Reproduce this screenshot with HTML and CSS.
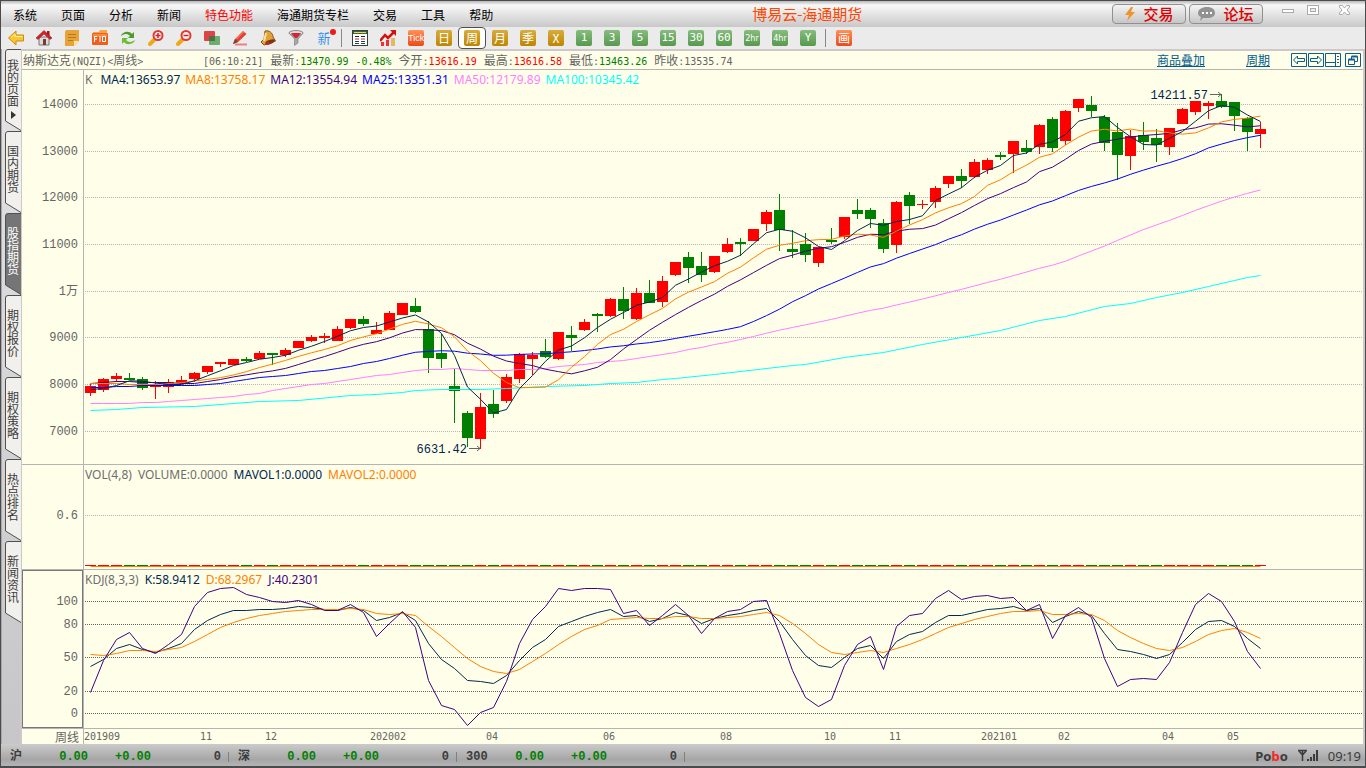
FILE: index.html
```html
<!DOCTYPE html>
<html lang="zh-CN">
<head>
<meta charset="utf-8">
<title>博易云-海通期货</title>
<link rel="stylesheet" href="styles.css">
</head>
<body>
<div class="app">
  <header class="titlebar">
    <nav class="menu">
      <a href="#">系统</a><a href="#">页面</a><a href="#">分析</a><a href="#">新闻</a><a href="#" class="hot">特色功能</a><a href="#">海通期货专栏</a><a href="#">交易</a><a href="#">工具</a><a href="#">帮助</a>
    </nav>
    <h1 class="brand">博易云-海通期货</h1>
    <div class="title-actions">
      <button class="pill" type="button"><svg width="12" height="16" viewBox="0 0 12 16"><path d="M7 1L1 9H5L3 15L11 6H7L9 1Z" fill="#f0932b"/></svg>交易</button>
      <button class="pill" type="button"><svg width="18" height="14" viewBox="0 0 18 14"><path d="M9 0C14 0 17 2.500 17 6S14 11 9 11L5 11L2 14L3 10C1 9 0 8 0 6C0 2.500 4 0 9 0Z" fill="#929292"/><path d="M4 5h2v2H4zM8 5h2v2H8zM12 5h2v2h-2z" fill="#fff"/></svg>论坛</button>
    </div>
    <div class="window-controls">
      <button type="button" aria-label="最小化"><svg width="14" height="12" viewBox="0 0 14 12"><rect x="1.500" y="5.500" width="11" height="3" fill="#fff" stroke="#aaa"/></svg></button>
      <button type="button" aria-label="最大化"><svg width="14" height="12" viewBox="0 0 14 12"><rect x="1.500" y="1.500" width="11" height="9" fill="#fff" stroke="#aaa"/><rect x="4.500" y="4.500" width="5" height="3" fill="#eee" stroke="#aaa"/></svg></button>
      <button type="button" aria-label="关闭"><svg width="14" height="12" viewBox="0 0 14 12"><path d="M1.500 1.500H4.500L6.500 4L8.500 1.500H11.500V3L9 6L11.500 9V10.500H8.500L6.500 8L4.500 10.500H1.500V9L4 6L1.500 3Z" fill="#fff" stroke="#aaa"/></svg></button>
    </div>
  </header>

  <div class="toolbar">
    <button type="button" aria-label="后退"><svg viewBox="0 0 16 16"><path d="M0.500 8L8 1V5H15.500V11H8V15Z" fill="#fbc62c" stroke="#c98b14"/><path d="M3 7.500L7 4V6.500H14.500" fill="none" stroke="#fff0a0"/></svg></button>
    <button type="button" aria-label="首页"><svg viewBox="0 0 16 16"><path d="M3 7H13V15H3Z" fill="#d9dde2" stroke="#777"/><path d="M11 1h2.500v5H11z" fill="#a11"/><path d="M0 8L8 0.500L16 8L14 9.500L8 4L2 9.500Z" fill="#d6202a" stroke="#901018" stroke-width=".5"/><path d="M7 9h3v6H7z" fill="#7b3d28"/></svg></button>
    <button type="button" aria-label="便笺"><svg viewBox="0 0 16 16"><path d="M2 0H15V11L10 16H1V2Z" fill="#e5a338"/><path d="M15 11L10 16V11Z" fill="#ffe49b"/><path d="M4 4.500H12M4 7.500H12M4 10.500H9" stroke="#b9781b"/></svg></button>
    <button type="button" aria-label="F10资料"><svg viewBox="0 0 16 16"><path d="M1 2H7L8 0H15V4H1Z" fill="#f7a541"/><rect x="0" y="3" width="16" height="12" rx="1" fill="#ee5f1e"/><path d="M1 4h14v3H1z" fill="#f58a45"/><path d="M2.500 12V6.500H5M2.500 9H5M8 6V12M10.500 6.500H13.500V11.500H10.500Z" stroke="#fff" fill="none"/></svg></button>
    <button type="button" aria-label="刷新"><svg viewBox="0 0 16 16"><path d="M1 6C2 2 9 0 12 4L14 2V8H8L10 6C7 3 4 4 1 6Z" fill="#4c9d28"/><path d="M15 10C14 14 7 16 4 12L2 14V8H8L6 10C9 13 12 12 15 10Z" fill="#6fbc38"/></svg></button>
    <button type="button" aria-label="放大"><svg viewBox="0 0 16 16"><path d="M2 14L6 10" stroke="#f0a818" stroke-width="4" stroke-linecap="round"/><circle cx="10" cy="5.500" r="4.500" fill="#fff1ee" stroke="#e03a30" stroke-width="2"/><path d="M7.500 5.500h5M10 3v5" stroke="#d22" stroke-width="1.500"/></svg></button>
    <button type="button" aria-label="缩小"><svg viewBox="0 0 16 16"><path d="M2 14L6 10" stroke="#f0a818" stroke-width="4" stroke-linecap="round"/><circle cx="10" cy="5.500" r="4.500" fill="#fff1ee" stroke="#e03a30" stroke-width="2"/><path d="M7.500 5.500h5" stroke="#d22" stroke-width="1.500"/></svg></button>
    <button type="button" aria-label="叠加"><svg viewBox="0 0 16 16"><rect x="0" y="1" width="11" height="10" rx="1" fill="#dd4444"/><rect x="5" y="6" width="11" height="9" rx="1" fill="#6cae6c"/><path d="M5 6h6v5H5z" fill="#4d7048"/></svg></button>
    <button type="button" aria-label="画笔"><svg viewBox="0 0 16 16"><path d="M3 14.500H15" stroke="#f08080" stroke-width="2"/><path d="M1 14L3 9L11 1L14.500 4L6 12Z" fill="#e5402b"/><path d="M4.500 9L11.500 2" stroke="#ff9d80"/><path d="M1 14L3 9L6 12Z" fill="#70483a"/></svg></button>
    <button type="button" aria-label="预警"><svg viewBox="0 0 16 16"><path d="M5 1C9 0 13 3 13 7L15.500 11L4 15L1 12L4 9Z" fill="#e2a23a" stroke="#855117"/><path d="M6 3Q5 7 4 11" stroke="#ffe29a" stroke-width="2" fill="none"/><ellipse cx="10" cy="12" rx="5" ry="2" transform="rotate(-20 10 12)" fill="#7d3418"/><circle cx="8" cy="13.500" r="1.500" fill="#d22"/></svg></button>
    <button type="button" aria-label="筛选"><svg viewBox="0 0 16 16"><path d="M1 3L6.500 9V15.500L10 13V9L15 3Z" fill="#a8a8a8" stroke="#777" stroke-width=".6"/><ellipse cx="8" cy="3" rx="7" ry="2.500" fill="#ddd" stroke="#888"/><path d="M3 3H13L9 8H7Z" fill="#d62433"/></svg></button>
    <button type="button" class="new-item">新<i class="dot"></i></button>
    <span class="divider"></span>
    <button type="button" aria-label="报价表"><svg viewBox="0 0 16 16"><rect x=".5" y=".5" width="15" height="15" fill="#fff" stroke="#33413c"/><path d="M1 1h14v3H1z" fill="#41603f"/><path d="M2 2.500h12" stroke="#e6d85c"/><path d="M3 6.500H7M9 6.500H13" stroke="#223"/><path d="M3 9H7M9 9H13" stroke="#c22"/><path d="M3 11.500H7M9 11.500H13" stroke="#238"/><path d="M3 13.500H7M9 13.500H13" stroke="#252"/></svg></button>
    <button type="button" aria-label="走势图"><svg viewBox="0 0 16 16"><path d="M1 12h3v4H1zM6 10h3v6H6z" fill="#f03030"/><path d="M11 8h4v8h-4z" fill="#e0bb62"/><path d="M0 11L5 5L8 8L14 2" fill="none" stroke="#d31111" stroke-width="2.500"/><path d="M10 0h6v6z" fill="#d31111"/></svg></button>
    <button type="button"><span class="chip red tick">Tick</span></button>
    <button type="button"><span class="chip gold">日</span></button>
    <button type="button" class="selected"><span class="chip gold">周</span></button>
    <button type="button"><span class="chip gold">月</span></button>
    <button type="button"><span class="chip gold">季</span></button>
    <button type="button"><span class="chip gold">X</span></button>
    <button type="button"><span class="chip green">1</span></button>
    <button type="button"><span class="chip green">3</span></button>
    <button type="button"><span class="chip green">5</span></button>
    <button type="button"><span class="chip green">15</span></button>
    <button type="button"><span class="chip green">30</span></button>
    <button type="button"><span class="chip green">60</span></button>
    <button type="button"><span class="chip green small">2hr</span></button>
    <button type="button"><span class="chip green small">4hr</span></button>
    <button type="button"><span class="chip green">Y</span></button>
    <span class="divider"></span>
    <button type="button"><span class="chip red">画</span></button>
  </div>

  <div class="body">
    <nav class="side">
      <button type="button" class="tab"><svg viewBox="0 0 16 82"><path d="M16 .5H3Q.5 .5 .5 3V72L16 81.500"/></svg><span>我的页面</span><i class="arrow"></i></button>
      <button type="button" class="tab"><svg viewBox="0 0 16 82"><path d="M16 .5H3Q.5 .5 .5 3V72L16 81.500"/></svg><span>国内期货</span></button>
      <button type="button" class="tab active"><svg viewBox="0 0 16 82"><path d="M16 .5H3Q.5 .5 .5 3V72L16 81.500"/></svg><span>股指期货</span></button>
      <button type="button" class="tab"><svg viewBox="0 0 16 82"><path d="M16 .5H3Q.5 .5 .5 3V72L16 81.500"/></svg><span>期权报价</span></button>
      <button type="button" class="tab"><svg viewBox="0 0 16 82"><path d="M16 .5H3Q.5 .5 .5 3V72L16 81.500"/></svg><span>期权策略</span></button>
      <button type="button" class="tab"><svg viewBox="0 0 16 82"><path d="M16 .5H3Q.5 .5 .5 3V72L16 81.500"/></svg><span>热点排名</span></button>
      <button type="button" class="tab"><svg viewBox="0 0 16 82"><path d="M16 .5H3Q.5 .5 .5 3V72L16 81.500"/></svg><span>新闻资讯</span></button>
    </nav>

    <main class="panel">
      <div class="quote">
        <span class="symbol">纳斯达克<b>(NQZI)&lt;</b>周线<b>&gt;</b></span>
        <span><b>[06:10:21]</b></span>
        <span>最新<b>:</b><b class="down">13470.99</b></span>
        <span><b class="down">-0.48%</b></span>
        <span>今开<b>:</b><b class="up">13616.19</b></span>
        <span>最高<b>:</b><b class="up">13616.58</b></span>
        <span>最低<b>:</b><b class="down">13463.26</b></span>
        <span>昨收<b>:</b><b>13535.74</b></span>
        <div class="quote-links">
          <a href="#">商品叠加</a>
          <a href="#">周期</a>
          <span class="mini">
            <button type="button" aria-label="左移"><svg viewBox="0 0 16 14"><path d="M.5 .5H15.500V13.500H.5ZM2.500 7L6.500 3V5.500H13.500V8.500H6.500V11Z"/></svg></button>
            <button type="button" aria-label="右移"><svg viewBox="0 0 16 14"><path d="M.5 .5H15.500V13.500H.5ZM13.500 7L9.500 3V5.500H2.500V8.500H9.500V11Z"/></svg></button>
            <button type="button" aria-label="侧栏"><svg viewBox="0 0 16 14"><path d="M.5 .5H15.500V13.500H.5ZM10.500 .5V13.500M.5 9.500H10.500M12 3.500H14M12 6.500H14M12 9.500H14"/></svg></button>
            <button type="button" class="restore" aria-label="还原"><svg viewBox="0 0 16 14"><path d="M.5 .5H15.500V13.500H.5ZM6.500 6V3.500H12.500V8.500H10M3.500 6.500H9.500V11.500H3.500Z"/><path d="M6.500 3.500H12.500M3.500 6.500H9.500" stroke-width="2"/></svg></button>
          </span>
        </div>
      </div>

      <section class="pane">
        <p class="legend"><span class="c-dim key">K</span><span class="c-navy">MA4:13653.97</span><span class="c-orange">MA8:13758.17</span><span class="c-purple">MA12:13554.94</span><span class="c-blue">MA25:13351.31</span><span class="c-pink">MA50:12179.89</span><span class="c-cyan">MA100:10345.42</span></p>
        <svg class="plot" id="price"></svg>
      </section>
      <section class="pane">
        <p class="legend wide"><span class="c-dim">VOL(4,8)</span><span class="c-dim">VOLUME:0.0000</span><span class="c-navy">MAVOL1:0.0000</span><span class="c-orange">MAVOL2:0.0000</span></p>
        <svg class="plot" id="volume"></svg>
      </section>
      <section class="pane">
        <p class="legend wide"><span class="c-dim">KDJ(8,3,3)</span><span class="c-navy">K:58.9412</span><span class="c-orange">D:68.2967</span><span class="c-purple">J:40.2301</span></p>
        <svg class="plot" id="kdj"></svg>
      </section>
      <section class="pane times">
        <span class="period">周线</span>
        <svg class="plot" id="times"></svg>
      </section>
    </main>
  </div>

  <footer class="status">
    <div class="index"><span class="name">沪</span><b>0.00</b><b>+0.00</b><span>0</span><i></i></div>
    <div class="index"><span class="name">深</span><b>0.00</b><b>+0.00</b><span>0</span><i></i></div>
    <div class="index"><span class="name">300</span><b>0.00</b><b>+0.00</b><span>0</span><i></i></div>
    <div class="tray">
      <strong>Po<em>b</em>o</strong>
      <svg width="22" height="14" viewBox="0 0 22 14"><path d="M1 1.500H10M5.500 1V12M2 2L5.500 6L9 2" fill="none" stroke="#3c3c3c" stroke-width="1.500"/><path d="M10 10h2v2h-2zM13 8h2v4h-2zM16 5h2v7h-2zM19 1h2v11h-2z" fill="#3c3c3c"/></svg>
      <time>09:19</time>
    </div>
  </footer>
</div>
<script src="chart.js"></script>
</body>
</html>
```
FILE: styles.css
```css
* { box-sizing: border-box; }
html, body { height: 100%; }
body {
  margin: 0;
  font: 12px/16px "Noto Sans CJK SC", sans-serif;
  color: #646464;
  background: #4b4b4d;
}
button { margin: 0; padding: 0; border: 0; background: none; font: inherit; color: inherit; }
a { color: inherit; text-decoration: none; }
svg { display: block; flex: none; }

.app {
  display: flex;
  flex-direction: column;
  height: 100vh;
  border: solid #4b4b4d;
  border-width: 1px 1px 2px;
  background: #ebebeb;
}

.titlebar {
  display: flex;
  flex: none;
  height: 26px;
  padding-left: 12px;
  background: linear-gradient(#b8b8b8 0, #f8f8f8 4px, #f0f0f0 8px, #c8c8c8 100%);
}
.menu { display: flex; gap: 24px; padding-top: 6px; color: #000; }
.menu .hot { color: #f00; }
.brand {
  flex: 1;
  margin: 0 0 0 259px;
  font-size: 15px;
  line-height: 26px;
  font-weight: 400;
  color: #ff4500;
}
.title-actions { display: flex; gap: 3px; padding-top: 3px; }
.pill {
  display: flex;
  align-items: center;
  justify-content: center;
  gap: 7px;
  width: 74px;
  height: 20px;
  border: 1px solid #909090;
  border-radius: 4px;
  background: linear-gradient(#f4f4f4, #c6c6c6);
  color: #e00000;
  font-size: 15px;
  line-height: 16px;
  font-weight: 500;
}
.window-controls { display: flex; padding: 1px 2px 0 13px; }
.window-controls button { display: grid; place-items: center; width: 24px; height: 16px; }
.window-controls button:nth-child(2) { width: 26px; }
.window-controls button:nth-child(3) { width: 37px; }

.toolbar { display: flex; align-items: center; flex: none; height: 22px; padding-left: 1px; }
.toolbar button { display: grid; place-items: center; width: 28px; height: 22px; }
.toolbar button > svg { width: 16px; height: 16px; }
.toolbar .selected { border: 1px solid #505050; border-radius: 4px; background: #fff; }
.divider { width: 1px; height: 18px; margin: 0 4px 0 3px; background: #888; }
.new-item { position: relative; font-size: 13px; color: #3a93e8; }
.dot { position: absolute; top: 2px; right: 2px; width: 6px; height: 6px; border-radius: 50%; background: #f01818; }
.chip {
  width: 16px;
  height: 16px;
  border-radius: 2px;
  color: #fff;
  font-size: 12px;
  line-height: 16px;
  text-align: center;
}
.chip.gold { background: linear-gradient(#d8ad3c, #bd8600); }
.chip.green { background: linear-gradient(#86bd7d, #57994e); font: 11px/16px "DejaVu Sans Mono", monospace; }
.chip.green.small { font: 9px/16px "Liberation Sans Narrow", "DejaVu Sans Condensed", sans-serif; }
.chip.red { background: linear-gradient(#ff9258, #ea4a18); }
.chip.tick { font: 9px/16px "Liberation Sans", sans-serif; }

.body { display: flex; flex: 1; min-height: 0; }
.side {
  display: flex;
  flex-direction: column;
  flex: none;
  width: 19px;
  padding-left: 3px;
  border-left: 1px solid #a8a8ac;
  background: linear-gradient(#e4e4e6, #c6c6c8);
}
.tab {
  position: relative;
  display: flex;
  flex-direction: column;
  align-items: center;
  justify-content: flex-start;
  width: 15px;
  height: 82px;
  padding: 10px 0 0 1px;
  color: #3c3c3c;
}
.tab + .tab { padding-top: 14px; }
.tab svg { position: absolute; inset: 0; width: 16px; height: 82px; fill: #f2f0ec; stroke: #505050; }
.tab.active { color: #fff; }
.tab.active svg { fill: #757575; }
.tab span { position: relative; width: 12px; line-height: 12px; overflow-wrap: anywhere; }
.arrow { position: relative; margin-top: 4px; border: solid transparent; border-width: 4px 0 4px 5px; border-left-color: #333; }

.panel {
  display: grid;
  grid-template-rows: 19px 395fr 105fr 159fr 15px;
  flex: 1;
  min-width: 0;
  border: solid #d0c8c8;
  border-width: 2px 2px 0;
  background: #ffffe9;
}
.quote { display: flex; gap: 7px; padding: 0 0 0 1px; line-height: 18px; border-bottom: 1px solid #b4b4b4; white-space: nowrap; }
.quote b { font: 10px/18px "DejaVu Sans Mono", monospace; }
.quote .symbol { width: 173px; }
.quote .up { color: #f00; }
.quote .down { color: #008000; }
.quote-links { display: flex; gap: 41px; margin-left: auto; color: #005b8e; }
.quote-links a { text-decoration: underline; }
.mini { display: flex; align-items: center; gap: 1px; margin: 0 2px 0 -20px; }
.mini svg { width: 16px; height: 14px; fill: none; stroke: #0b5e8e; }
.restore { margin-left: 3px; }

.pane { position: relative; min-height: 0; border-bottom: 1px solid #b4b4b4; overflow: hidden; }
.pane.times { display: grid; grid-template-columns: 57px 1fr; border: 0; overflow: visible; }
.period { line-height: 15px; text-align: right; }
.plot { width: 100%; height: 100%; }
.legend {
  position: absolute;
  left: 63px;
  top: 1px;
  display: flex;
  gap: 5px;
  margin: 0;
  font: 12px/18px "Noto Sans", sans-serif;
}
.legend.wide { gap: 6px; }
.key { margin-right: 3px; }
.c-dim { color: #6e6e6e; }
.c-navy { color: #002850; }
.c-orange { color: #ff8000; }
.c-purple { color: #400080; }
.c-blue { color: #0000ff; }
.c-pink { color: #ff80ff; }
.c-cyan { color: #00ffff; }

.axis { stroke: #b4b4b4; }
.grid { stroke: #b4b4b4; stroke-dasharray: 1 1; }
.grid.dark { stroke: #646464; }
.focus { fill: none; stroke: #787878; }
.tick-label { font: 12px "Liberation Mono", "Noto Sans CJK SC", monospace; fill: #646464; text-anchor: end; }
.time-label { font: 10px "DejaVu Sans Mono", monospace; fill: #646464; }
.mark { font: 12px "Liberation Mono", monospace; fill: #002850; text-anchor: end; }
.mark-arrow { fill: none; stroke: #646464; }
.rise { fill: #f00; }
.fall { fill: #008000; }
.line { fill: none; stroke: currentColor; stroke-width: 1; }

.status {
  display: flex;
  flex: none;
  height: 22px;
  padding: 1px 4px 0 9px;
  font: bold 12px/24px "Liberation Mono", "Noto Sans CJK SC", monospace;
  color: #3c3c3c;
  background: linear-gradient(#cbcbcb, #a6a6a6 70%, #b4b4b4);
}
.index { display: grid; grid-template-columns: 28px 50px 63px 70px 8px; width: 228px; text-align: right; }
.index b { color: #008000; }
.index .name { text-align: left; }
.index i { justify-self: end; align-self: center; width: 1px; height: 10px; background: #808080; }
.tray { display: flex; align-items: center; gap: 9px; margin-left: auto; }
.tray strong { font: bold 13px/24px "Noto Sans", sans-serif; }
.tray em { font-style: normal; color: #f22; }
.tray time { font: 13px/24px "Noto Sans", sans-serif; }
```
FILE: chart.js
```js
// Each candle: body top, body bottom, wick top, wick bottom, direction (1 = rise).
const candles = [
  [386,393,384,396,1],[379,390,378,392,1],[376,379,373,382,1],[378,380,373,380,0],[379,388,377,390,0],
  [386,387,381,399,1],[382,387,379,393,1],[380,383,376,384,1],[373,379,372,382,1],[366,372,366,374,1],
  [362,364,362,367,1],[359,365,359,365,1],[359,361,357,362,0],[353,359,351,359,1],[353,355,353,365,0],
  [350,355,348,357,1],[341,348,341,348,1],[337,341,335,342,1],[336,338,333,343,1],[329,341,326,341,1],
  [319,328,319,329,1],[319,324,316,326,0],[330,334,322,334,1],[313,330,311,330,1],[303,315,303,315,1],
  [306,312,298,313,0],[329,358,321,373,0],[353,359,334,368,0],[386,391,369,423,0],[413,438,411,447,0],
  [407,439,393,449,1],[404,414,390,418,0],[377,401,374,403,1],[354,379,353,383,1],[355,359,352,375,1],
  [351,357,339,358,0],[332,359,332,360,1],[335,338,326,351,0],[322,330,319,331,1],[314,316,313,332,0],
  [299,316,298,317,1],[299,311,287,319,0],[293,319,288,320,1],[293,303,280,303,0],[281,302,276,307,1],
  [262,275,262,276,1],[257,268,252,283,0],[266,275,252,282,0],[256,272,256,273,1],[244,252,238,253,1],
  [242,244,238,256,0],[229,241,229,241,1],[212,224,210,231,1],[210,230,194,251,0],[249,252,230,258,0],
  [244,255,233,262,0],[247,263,247,267,1],[240,242,228,244,0],[217,237,217,239,1],[210,214,199,219,0],
  [210,219,208,228,0],[223,249,219,253,0],[202,245,201,253,1],[195,206,192,224,0],[204,205,200,209,1],
  [188,202,186,208,1],[176,184,176,188,1],[176,181,169,188,0],[162,177,159,178,1],[160,170,158,174,1],
  [155,157,152,160,0],[141,154,141,173,1],[148,152,140,154,0],[125,147,124,154,1],[119,148,117,152,0],
  [111,141,110,145,1],[99,108,99,112,1],[105,111,96,117,0],[117,143,115,151,0],[132,155,123,180,0],
  [136,156,130,170,1],[135,142,122,150,0],[138,145,129,162,0],[128,147,128,155,1],[109,124,108,124,1],
  [101,112,101,115,1],[103,106,101,119,1],[101,107,94,108,0],[102,116,102,131,0],[118,132,117,151,0],
  [129,134,122,148,1]
];
// Averages for the first candles, where the window reaches before the visible range.
const heads = {
  4: [389,388,385],
  8: [383,383,383,384,384,384,383],
  12: [383,382,381,381,382,382,382,383,383,381,379],
  25: [387,387,386,386,385,385,385,385,385,384,383,381,379,377,376,375,373,371,370,368,366,363,361,358],
  50: [403,403,403,403,402,402,401,400,399,398,397,396,394,393,390,388,386,384,383,381,379,377,375,374,372,
       370,369,369,368,369,370,370,370,369,369,368,366,365,364,362,361,360,358,356,354,352,349,347,344]
};
const ma100 = [[0,410],[2,409],[4,407],[8,406],[11,403],[13,401],[16,400],[20,395],[22,394],[24,392],[25,390],
  [27,389],[30,389],[32,388],[35,386],[38,385],[40,383],[42,382],[44,379],[45,378],[48,374],[52,368],[54,365],
  [55,364],[58,357],[61,352],[64,344],[67,337],[70,330],[73,320],[75,316],[78,306],[80,303],[82,297],[84,292],
  [86,286],[88,280],[89,277],[90,275]];
const kLine = [666,659,648,644,649,652,648,643,629,620,614,610,610,609,609,608,606,607,609,610,607,610,620,617,612,
  620,643,659,668,680,681,683,675,660,647,639,626,621,616,612,609,616,615,621,618,612,615,623,618,615,613,610,608,
  621,639,655,665,667,657,648,645,658,641,634,631,622,615,615,612,609,608,606,610,608,622,616,611,615,633,649,651,
  654,658,654,642,629,621,620,626,638,648];
const dLine = [654,655,653,650,650,651,649,647,641,634,627,622,618,615,613,611,610,609,609,609,608,609,613,614,613,
  615,626,636,647,658,666,671,673,669,661,653,644,636,629,625,619,618,617,618,618,616,616,618,618,617,616,614,612,
  615,623,633,644,652,654,652,650,652,648,644,639,633,627,623,619,616,613,611,611,610,614,614,613,614,620,630,637,
  643,648,650,647,641,634,630,628,632,638];
const jLine = [692,660,639,632,648,653,644,634,606,592,588,587,594,597,601,602,600,604,610,610,604,612,636,623,611,
  627,680,705,709,725,712,707,681,643,619,606,588,590,588,588,589,613,610,625,615,604,615,633,618,611,609,601,600,
  633,670,697,706,699,665,644,641,669,641,615,613,598,590,599,596,595,598,597,610,604,638,615,607,617,658,
  686,679,678,679,662,632,604,593,601,621,651,668];
jLine.splice(59, 5, 644, 636, 669, 626, 615);

const xOf = i => 90 + 13 * i;
const closes = candles.map(c => c[4] ? c[0] : c[1]);
const text = (cls, x, y, s) => `<text class="${cls}" x="${x}" y="${y}">${s}</text>`;
const grid = (y, cls = '') => `<path class="grid ${cls}" d="M85 ${y + 0.5}H4000"/>`;
const axis = '<path class="axis" d="M83.5 0V4000"/>';
const line = (cls, pts) => `<polyline class="line ${cls}" points="${pts.map(p => `${p[0] + 0.5},${p[1] + 0.5}`).join(' ')}"/>`;
const series = (cls, ys) => line(cls, ys.map((y, i) => [xOf(i), y]));
const average = n => closes.map((_, i) => i < n - 1
  ? heads[n][i]
  : closes.slice(i - n + 1, i + 1).reduce((a, b) => a + b, 0) / n);
const draw = (id, left, top, parts) => {
  document.getElementById(id).innerHTML = `<g transform="translate(${-left} ${-top})">${parts.join('')}</g>`;
};

const prices = [[104,'14000'],[151,'13000'],[197,'12000'],[244,'11000'],[291,'1万'],[337,'9000'],[384,'8000'],[431,'7000']];
draw('price', 22, 70, [
  axis,
  ...prices.map(([y, s]) => grid(y) + text('tick-label', 78, y + 4, s)),
  ...candles.map(([t, b, wt, wb, up], i) =>
    `<path class="${up ? 'rise' : 'fall'}" d="M${xOf(i) - 5} ${t}h11v${b - t}h-11zM${xOf(i)} ${wt}h1v${wb - wt}h-1z"/>`),
  line('c-cyan', ma100.map(([i, y]) => [xOf(i), y])),
  series('c-pink', average(50)), series('c-blue', average(25)), series('c-purple', average(12)),
  series('c-orange', average(8)), series('c-navy', average(4)),
  text('mark', 1208, 99, '14211.57'), text('mark', 467, 453, '6631.42'),
  '<path class="mark-arrow" d="M1210 94.5H1221M1218 92L1221 94.5L1218 97M469 448.500H480M477 446L480 448.500L477 451"/>'
]);
draw('volume', 22, 465, [
  axis, grid(515), text('tick-label', 78, 519, '0.6'),
  ...candles.map((c, i) => `<path class="${c[4] ? 'rise' : 'fall'}" d="M${xOf(i) - 5} 565h11v1h-11z"/>`),
  line('c-orange', [[90, 566], [1260, 566]])
]);
draw('kdj', 22, 570, [
  axis, '<rect class="focus" x="22.5" y="570.5" width="60" height="157"/>',
  ...[[601,'100'],[624,'80'],[657,'50'],[691,'20'],[713,'0']].map(([y, s]) => grid(y, 'dark') + text('tick-label', 78, y + 4, s)),
  series('c-navy', kLine), series('c-orange', dLine), series('c-purple', jLine)
]);
draw('times', 79, 729, [
  axis,
  ...[[84,'201909'],[200,'11'],[265,'12'],[370,'202002'],[486,'04'],[603,'06'],[720,'08'],[824,'10'],[889,'11'],
    [981,'202101'],[1058,'02'],[1162,'04'],[1227,'05']].map(([x, s]) => text('time-label', x, 740, s))
]);
```
